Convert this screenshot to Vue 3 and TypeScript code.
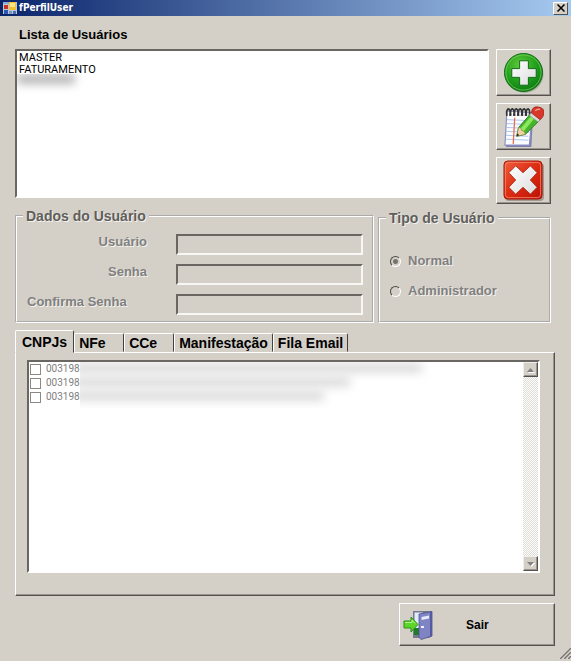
<script setup lang="ts">
import { ref } from 'vue'

interface CnpjRow {
  prefix: string
  masked: number
  checked: boolean
}

const tabs: string[] = ['CNPJs', 'NFe', 'CCe', 'Manifestação', 'Fila Email']
const activeTab = ref<string>('CNPJs')
const users: string[] = ['MASTER', 'FATURAMENTO']
const selectedUser = ref<string | null>(null)
const userType = ref<string>('normal')
const rows = ref<CnpjRow[]>([
  { prefix: '003198', masked: 348, checked: false },
  { prefix: '003198', masked: 276, checked: false },
  { prefix: '003198', masked: 250, checked: false },
])
</script>

<template>
  <div class="window">
    <header class="titlebar">
      <svg class="app-icon" viewBox="0 0 14 14" aria-hidden="true">
        <rect x="0" y="1" width="14" height="12" fill="#b9c6de" />
        <rect x="0" y="1" width="6" height="2" fill="#8aa6d8" />
        <rect x="1" y="4" width="4" height="4" fill="#c8311f" />
        <rect x="6" y="1" width="7" height="8" fill="#f2c230" />
        <rect x="7" y="2" width="5" height="4" fill="#fbe48a" />
        <rect x="1" y="9" width="4" height="4" fill="#2f57a8" />
        <rect x="6" y="10" width="3" height="3" fill="#7c96c4" />
        <rect x="10" y="10" width="3" height="3" fill="#4e6faf" />
      </svg>
      <span class="title">fPerfilUser</span>
      <button class="close" type="button" aria-label="Fechar">
        <svg viewBox="0 0 8 8" aria-hidden="true"><path d="M0.5 0.5L7.5 7.5M7.5 0.5L0.5 7.5" stroke="#000" stroke-width="1.5" /></svg>
      </button>
    </header>

    <main class="content">
      <label class="heading" for="user-list">Lista de Usuários</label>

      <section class="top">
        <div class="user-box">
          <select id="user-list" v-model="selectedUser" class="user-list" size="5">
            <option v-for="u in users" :key="u" :value="u">{{ u }}</option>
          </select>
          <span class="smudge-user" aria-hidden="true"><i></i></span>
        </div>
        <div class="actions">
          <button class="raised action" type="button" aria-label="Adicionar">
            <svg viewBox="0 0 42 42" aria-hidden="true">
              <defs>
                <radialGradient id="green" cx="0.4" cy="0.3" r="0.75">
                  <stop offset="0" stop-color="#5fc83a" />
                  <stop offset="0.6" stop-color="#1f9d1b" />
                  <stop offset="1" stop-color="#0b7411" />
                </radialGradient>
                <linearGradient id="silver" x1="0" y1="0" x2="1" y2="1">
                  <stop offset="0" stop-color="#ffffff" />
                  <stop offset="1" stop-color="#dcdcdc" />
                </linearGradient>
              </defs>
              <circle cx="22" cy="22.500" r="19.500" fill="#8d9a86" opacity="0.6" />
              <circle cx="21" cy="21" r="19.500" fill="url(#green)" stroke="#0c6d12" />
              <circle cx="21" cy="21" r="18" fill="none" stroke="#7fd463" stroke-width="1" opacity="0.7" />
              <path d="M17 9h9v8h8v9h-8v8h-9v-8H9v-9h8z" fill="url(#silver)" stroke="#0d6b12" stroke-width="1" />
            </svg>
          </button>
          <button class="raised action" type="button" aria-label="Editar">
            <svg viewBox="0 0 42 42" aria-hidden="true">
              <path d="M5 6L31 8L29 42L3 42z" fill="#7d7fae" />
              <path d="M4 5L30 7L27 40L2 40z" fill="#fbfcff" stroke="#8d8fc0" stroke-width="1.200" />
              <path d="M4 14L28 15M4 18L28 19M4 22L27 23M3 26L27 27M3 30L26 31M3 34L26 35" stroke="#a9c6ee" stroke-width="1" />
              <path d="M12 12L10.500 39" stroke="#ee6a4c" stroke-width="1.300" />
              <path d="M4 10q-1-7 2-7q2 1 1 7M8 10q-1-7 2-7q2 1 1 7M12 10q-1-7 2-7q2 1 1 7M16 10q-1-7 2-7q2 1 1 7M20 10q-1-7 2-7q2 1 1 7M24 10q-1-7 2-7q2 1 1 7" fill="none" stroke="#333" stroke-width="1.700" />
              <path d="M14 31L16 22L30 6L39 13L23 29z" fill="#45b52c" stroke="#2c7d1d" stroke-width="1" />
              <path d="M18 23L31 8L34 10.500L21 26z" fill="#8be75e" />
              <path d="M14 31L16 22Q19 22 19 25Q22 25 23 29z" fill="#efd3a2" stroke="#9a8250" stroke-width="0.600" />
              <path d="M14 31l0.700-3 2 2z" fill="#222" />
              <path d="M27 9.500L30 6L39 13L36 16.500z" fill="#d8d8d8" stroke="#888" stroke-width="0.600" />
              <path d="M29 7Q30 0 36 1Q43 2 42 8Q41 12 38 14z" fill="#d7382a" stroke="#9a1c14" stroke-width="0.800" />
              <path d="M33 5Q35 2.500 38 3.500" fill="none" stroke="#f59a8c" stroke-width="1.500" />
            </svg>
          </button>
          <button class="raised action" type="button" aria-label="Excluir">
            <svg viewBox="0 0 42 42" aria-hidden="true">
              <defs>
                <linearGradient id="red" x1="0" y1="0" x2="1" y2="1">
                  <stop offset="0" stop-color="#f0603c" />
                  <stop offset="0.5" stop-color="#dc2b12" />
                  <stop offset="1" stop-color="#bb1206" />
                </linearGradient>
              </defs>
              <rect x="2" y="3" width="40" height="39" rx="4" fill="#8f7f78" opacity="0.7" />
              <rect x="1" y="1" width="39" height="39" rx="4" fill="url(#red)" stroke="#a31508" />
              <rect x="2.500" y="2.500" width="36" height="36" rx="3" fill="none" stroke="#f58a6c" opacity="0.8" />
              <path d="M13 6L20.500 13L28 6L35 13L28 20.500L35 28L28 35L20.500 28L13 35L6 28L13 20.500L6 13z" fill="url(#silver)" stroke="#a51a0c" stroke-width="0.800" />
            </svg>
          </button>
        </div>
      </section>

      <section class="groups">
        <fieldset class="group data" disabled>
          <legend>Dados do Usuário</legend>
          <div class="field">
            <label for="usuario">Usuário</label>
            <input id="usuario" type="text" />
          </div>
          <div class="field">
            <label for="senha">Senha</label>
            <input id="senha" type="password" />
          </div>
          <div class="field">
            <label class="wide" for="confirma">Confirma Senha</label>
            <input id="confirma" type="password" />
          </div>
        </fieldset>

        <fieldset class="group kind" disabled>
          <legend>Tipo de Usuário</legend>
          <label class="option"><input v-model="userType" type="radio" name="tipo" value="normal" />Normal</label>
          <label class="option"><input v-model="userType" type="radio" name="tipo" value="admin" />Administrador</label>
        </fieldset>
      </section>

      <section class="tabs">
        <div class="tab-row" role="tablist">
          <button
            v-for="t in tabs"
            :key="t"
            type="button"
            role="tab"
            class="tab"
            :class="{ active: t === activeTab }"
            :aria-selected="t === activeTab"
            @click="activeTab = t"
          >{{ t }}</button>
        </div>
        <div class="panel" role="tabpanel">
          <div class="check-box">
            <ul class="check-list">
              <li v-for="(row, i) in rows" :key="i">
                <label><input v-model="row.checked" type="checkbox" disabled />{{ row.prefix }}</label>
              </li>
            </ul>
            <div class="smudge-rows" aria-hidden="true">
              <i v-for="(row, i) in rows" :key="i" :style="{ width: row.masked + 'px' }"></i>
            </div>
            <div class="scrollbar">
              <button type="button" class="arrow" disabled aria-label="Rolar para cima">
                <svg viewBox="0 0 7 4" aria-hidden="true"><path d="M1 5L4.500 1.500L8 5z" fill="#fff" /><path d="M0 4L3.500 0L7 4z" fill="#808080" /></svg>
              </button>
              <button type="button" class="arrow" disabled aria-label="Rolar para baixo">
                <svg viewBox="0 0 7 4" aria-hidden="true"><path d="M1 1L4.500 5L8 1z" fill="#fff" /><path d="M0 0L3.500 4L7 0z" fill="#808080" /></svg>
              </button>
            </div>
          </div>
        </div>
      </section>

      <button class="raised exit" type="button">
        <svg viewBox="0 0 30 30" aria-hidden="true">
          <path d="M10 1h19v25l-3 2H10z" fill="#77798f" />
          <path d="M11.500 2.500h8v22h-8z" fill="#e4ebf8" />
          <path d="M11 18h6v7h-6z" fill="#1e7c28" />
          <path d="M16 4L29 1.500V26L18 29.500L16 27z" fill="#7f84c4" stroke="#4d5190" stroke-width="0.800" />
          <path d="M27 2L29 1.500V26L27 26.500z" fill="#555a9e" />
          <path d="M18.500 7L26 5.500V8.500L18.500 10z" fill="#e6eafc" />
          <rect x="18" y="16" width="3" height="2" fill="#f1f2ff" />
          <path d="M1 11H8V7L15 14.500L8 22V18H1z" fill="#5cd52b" stroke="#2f8f17" stroke-width="1" />
          <path d="M2 12.500H9V10L12 13.500" fill="none" stroke="#b4f48e" stroke-width="1" />
        </svg>
        <span>Sair</span>
      </button>
    </main>

    <svg class="grip" viewBox="0 0 12 12" aria-hidden="true">
      <path d="M0 12L12 0M4 12L12 4M8 12L12 8" stroke="#fff" stroke-width="1" />
      <path d="M1 12L12 1M5 12L12 5M9 12L12 9" stroke="#77736c" stroke-width="1.500" />
    </svg>
  </div>
</template>

<style>
body {
  background: #d4d0c8;
}
</style>

<style scoped>
* {
  box-sizing: border-box;
}
.window {
  position: relative;
  min-height: 100vh;
  background: #d4d0c8;
  font: bold 13px/16px "Liberation Sans", Arial, sans-serif;
  color: #000;
}
button,
input,
select {
  appearance: none;
  margin: 0;
  padding: 0;
  border-radius: 0;
  font: inherit;
  color: inherit;
}
svg {
  display: block;
}
.titlebar {
  display: flex;
  align-items: center;
  height: 16px;
  padding: 0 3px;
  gap: 2px;
  background: linear-gradient(90deg, #0a246a, #a6caf0);
}
.app-icon {
  width: 14px;
  height: 14px;
}
.title {
  flex: 1;
  color: #fff;
  font: bold 10px/16px "DejaVu Sans Condensed", "DejaVu Sans", sans-serif;
}
.close {
  display: flex;
  align-items: center;
  justify-content: center;
  width: 15px;
  height: 13px;
  background: #d4d0c8;
  border: 1px solid;
  border-color: #fff #55524d #55524d #fff;
}
.close svg {
  width: 8px;
  height: 8px;
}
.content {
  display: flex;
  flex-direction: column;
  padding: 11px 16px 14px 15px;
}
.heading {
  margin-left: 4px;
  margin-bottom: 6px;
}
.top {
  display: flex;
  gap: 7px;
  padding-right: 4px;
}
.user-box {
  position: relative;
  flex: 1;
  display: flex;
  height: 149px;
}
.user-list {
  flex: 1;
  height: 100%;
  padding: 0;
  overflow: hidden;
  background: #fff;
  border: 2px solid;
  border-color: #6a6762 #fff #fff #6a6762;
  outline: none;
  font: 11px/12px Roboto, "Liberation Sans", sans-serif;
}
.user-list option {
  height: 12px;
  min-height: 12px;
  padding: 0 2px;
  line-height: 12px;
}
.smudge-user {
  position: absolute;
  left: 2px;
  top: 25px;
  width: 75px;
  height: 22px;
  overflow: hidden;
}
.smudge-user i {
  display: block;
  width: 58px;
  height: 10px;
  background: #b4b4b4;
  filter: blur(5px);
}
.actions {
  display: flex;
  flex-direction: column;
  gap: 7px;
}
.raised {
  background: #d4d0c8;
  border: 1px solid;
  border-color: #fff #55524d #55524d #fff;
  box-shadow: inset -1px -1px #9a968f;
}
.action {
  display: flex;
  align-items: center;
  justify-content: center;
  width: 55px;
  height: 47px;
}
.action svg {
  width: 41px;
  height: 41px;
}
.groups {
  display: flex;
  align-items: flex-end;
  gap: 4px;
  margin-top: 4px;
  padding-right: 4px;
}
.group {
  min-width: 0;
  margin: 0;
  border: 2px groove #fff;
  color: #808080;
  text-shadow: 1px 1px #f4f2ee;
}
.group legend {
  padding: 0 3px;
  color: #5f5e5b;
  font-size: 14px;
}
.data {
  flex: 1;
  display: flex;
  flex-direction: column;
  gap: 9px;
  padding: 10px 9px 6px 10px;
}
.data legend {
  margin-left: -4px;
}
.field {
  display: flex;
  align-items: flex-start;
}
.field label {
  width: 120px;
  text-align: right;
}
.field label.wide {
  text-align: left;
}
.field input {
  flex: 1;
  min-width: 0;
  margin-left: 29px;
  height: 21px;
  background: #d4d0c8;
  border: 2px solid;
  border-color: #6a6762 #f8f7f5 #f8f7f5 #6a6762;
}
.kind {
  width: 173px;
  padding: 25px 9px 20px 10px;
}
.kind legend {
  margin-left: -4px;
}
.option {
  display: flex;
  align-items: center;
  gap: 7px;
  height: 20px;
}
.option + .option {
  margin-top: 10px;
}
.option input {
  width: 11px;
  height: 11px;
  border: 1px solid;
  border-color: #4a4844 #fff #fff #4a4844;
  border-radius: 50%;
}
.option input:checked {
  background: radial-gradient(circle, #77746e 2px, transparent 3px);
}
.tabs {
  margin-top: 7px;
}
.tab-row {
  display: flex;
  align-items: flex-end;
}
.tab {
  min-width: 50px;
  height: 19px;
  padding: 0 4px;
  text-align: left;
  font-size: 14px;
  background: #d4d0c8;
  border: 1px solid;
  border-color: #fff #44413d transparent #fff;
  border-radius: 2px 2px 0 0;
}
.tab.active {
  position: relative;
  min-width: 58px;
  height: 23px;
  margin-bottom: -1px;
  padding: 0 6px;
  z-index: 1;
  border-bottom-color: #d4d0c8;
}
.panel {
  padding: 7px 14px 22px 11px;
  border: 1px solid;
  border-color: #fff #55524d #55524d #fff;
  box-shadow: inset -1px -1px #9a968f;
}
.check-box {
  position: relative;
  display: flex;
  height: 213px;
  background: #fff;
  border: 2px solid;
  border-color: #6a6762 #fff #fff #6a6762;
}
.check-list {
  flex: 1;
  margin: 0;
  padding: 0 1px;
  list-style: none;
  color: #808080;
  font: 10px/14px Roboto, "Liberation Sans", sans-serif;
}
.check-list label {
  display: flex;
  align-items: center;
  gap: 5px;
  height: 14px;
}
.check-list input {
  width: 11px;
  height: 11px;
  border: 1px solid #8c8983;
}
.smudge-rows {
  position: absolute;
  left: 51px;
  top: 0;
  width: 375px;
  height: 46px;
  overflow: hidden;
}
.smudge-rows i {
  display: block;
  height: 10px;
  margin: 1px 0 4px -6px;
  background: #dcdcdc;
  filter: blur(5px);
}
.scrollbar {
  display: flex;
  flex-direction: column;
  justify-content: space-between;
  width: 15px;
  background: repeating-conic-gradient(#fff 0 25%, #dedbd4 0 50%) 0 0 / 2px 2px;
}
.arrow {
  display: flex;
  align-items: center;
  justify-content: center;
  width: 15px;
  height: 15px;
  background: #d4d0c8;
  border: 1px solid;
  border-color: #f0eeea #55524d #55524d #f0eeea;
  box-shadow: inset -1px -1px #9a968f;
}
.arrow svg {
  width: 7px;
  height: 4px;
  overflow: visible;
}
.exit {
  align-self: flex-end;
  display: flex;
  align-items: center;
  width: 156px;
  height: 43px;
  margin-top: 7px;
  padding-left: 3px;
  font-size: 12px;
}
.exit svg {
  width: 30px;
  height: 30px;
}
.exit span {
  padding-left: 33px;
}
.grip {
  position: absolute;
  right: 0;
  bottom: 2px;
  width: 12px;
  height: 12px;
}
</style>
